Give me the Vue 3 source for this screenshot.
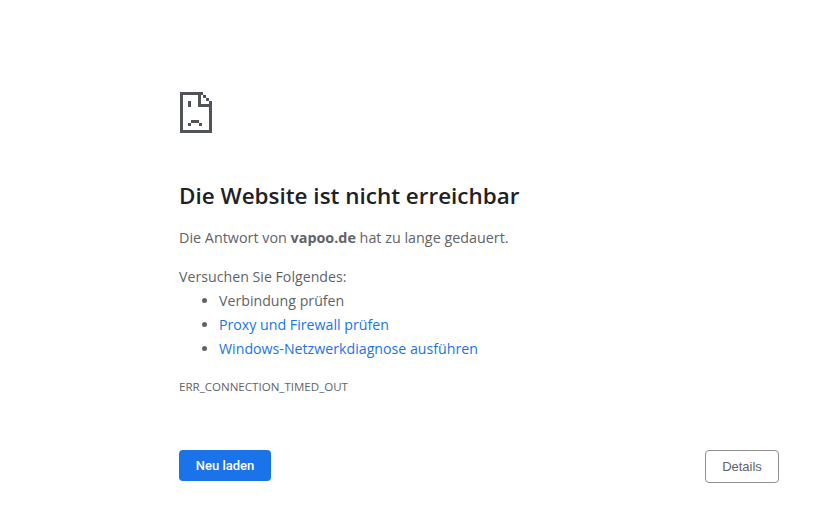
<script setup>
const steps = [
  { text: 'Verbindung prüfen', link: false },
  { text: 'Proxy und Firewall prüfen', link: true },
  { text: 'Windows-Netzwerkdiagnose ausführen', link: true }
]
</script>

<template>
  <div class="page">
    <svg class="sad" width="32" height="41" viewBox="0 0 32 41" shape-rendering="crispEdges" fill="#505357">
      <!-- sheet outline -->
      <rect x="0" y="0" width="20" height="3" />
      <rect x="0" y="0" width="3" height="41" />
      <rect x="0" y="38" width="32" height="3" />
      <rect x="29" y="12" width="3" height="29" />
      <!-- folded corner -->
      <rect x="18" y="3" width="3" height="12" />
      <rect x="18" y="12" width="14" height="3" />
      <rect x="20" y="0" width="3" height="3" />
      <rect x="23" y="3" width="3" height="3" />
      <rect x="26" y="6" width="3" height="3" />
      <rect x="29" y="9" width="3" height="3" />
      <!-- eye and mouth -->
      <rect x="8" y="9" width="3" height="6" />
      <rect x="11" y="28" width="8" height="3" />
      <rect x="8" y="31" width="3" height="3" />
      <rect x="19" y="31" width="3" height="3" />
    </svg>

    <h1>Die Website ist nicht erreichbar</h1>
    <p class="lead">Die Antwort von <strong>vapoo.de</strong> hat zu lange gedauert.</p>
    <p class="try">Versuchen Sie Folgendes:</p>
    <ul>
      <li v-for="s in steps" :key="s.text">
        <a v-if="s.link" href="#">{{ s.text }}</a>
        <span v-else>{{ s.text }}</span>
      </li>
    </ul>
    <div class="code">ERR_CONNECTION_TIMED_OUT</div>

    <div class="actions">
      <button class="reload">Neu laden</button>
      <button class="details">Details</button>
    </div>
  </div>
</template>

<style>
html, body { background: #fff; }
</style>

<style scoped>
.page {
  box-sizing: border-box;
  width: 825px;
  height: 522px;
  padding: 92px 46px 0 179px;
  font-family: "Open Sans", "Noto Sans", sans-serif;
  color: #5f6368;
  overflow: hidden;
}
.sad {
  display: block;
  margin-left: 1px;
}
h1 {
  margin: 49px 0 0;
  font-size: 22.45px;
  line-height: 27px;
  font-weight: 600;
  color: #202124;
}
.lead {
  margin: 17px 0 0;
  font-size: 14.35px;
  line-height: 24px;
}
.lead strong {
  font-weight: 700;
}
.try {
  margin: 15px 0 0;
  font-size: 14.2px;
  line-height: 24px;
}
ul {
  margin: 0;
  padding: 0 0 0 40px;
  font-size: 14.2px;
  line-height: 24px;
}
a {
  color: #1a73e8;
  text-decoration: none;
}
.code {
  margin-top: 18px;
  font-size: 11.55px;
  line-height: 16px;
}
.actions {
  display: flex;
  justify-content: space-between;
  align-items: flex-start;
  margin-top: 55px;
}
button {
  box-sizing: border-box;
  border-radius: 4px;
}
.reload {
  width: 92px;
  height: 31px;
  border: 0;
  background: #1a73e8;
  color: #fff;
  font-family: Roboto, sans-serif;
  font-size: 13px;
  font-weight: 500;
}
.details {
  width: 74px;
  height: 33px;
  background: #fff;
  border: 1px solid #8f8f8f;
  color: #5f6368;
  font-family: "Liberation Sans", sans-serif;
  font-size: 13px;
}
</style>
